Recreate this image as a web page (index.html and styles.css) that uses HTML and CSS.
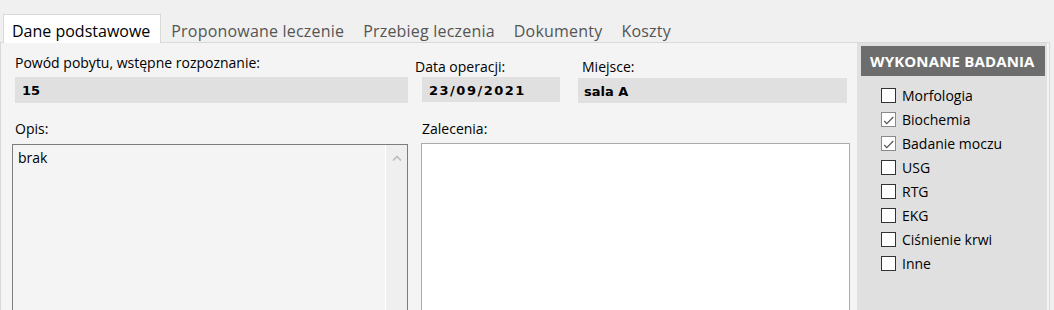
FILE: index.html
```html
<!doctype html>
<html lang="pl">
<head>
  <meta charset="UTF-8">
  <title>Dane podstawowe</title>
  <link rel="stylesheet" href="styles.css">
</head>
<body>

  <ul class="tabs">
    <li class="tab active">Dane podstawowe</li>
    <li class="tab">Proponowane leczenie</li>
    <li class="tab">Przebieg leczenia</li>
    <li class="tab">Dokumenty</li>
    <li class="tab">Koszty</li>
  </ul>

  <div class="panel">
    <div class="main">
      <div class="fields">
        <div class="group group-reason">
          <label>Powód pobytu, wstępne rozpoznanie:</label>
          <div class="field">15</div>
        </div>
        <div class="group group-date">
          <label>Data operacji:</label>
          <div class="field field-date">23/09/2021</div>
        </div>
        <div class="group group-place">
          <label>Miejsce:</label>
          <div class="field">sala A</div>
        </div>
      </div>

      <div class="notes">
        <div class="note note-desc">
          <label>Opis:</label>
          <div class="memo readonly">
            <div class="memo-text">brak</div>
            <div class="scroll">
              <svg width="10" height="6" viewBox="0 0 10 6"><path d="M1 5.5 L5 1.5 L9 5.5" fill="none" stroke="#bdbdbd" stroke-width="1.6"/></svg>
            </div>
          </div>
        </div>
        <div class="note note-recs">
          <label>Zalecenia:</label>
          <div class="memo"></div>
        </div>
      </div>
    </div>

    <div class="tests">
      <h2>WYKONANE BADANIA</h2>
      <ul class="checks">
        <li><span class="box"></span>Morfologia</li>
        <li><span class="box checked"><svg width="13" height="13" viewBox="0 0 13 13"><path d="M2.3 8 L4.8 10.6 L11.3 4" fill="none" stroke="#555" stroke-width="1.2"/></svg></span>Biochemia</li>
        <li><span class="box checked"><svg width="13" height="13" viewBox="0 0 13 13"><path d="M2.3 8 L4.8 10.6 L11.3 4" fill="none" stroke="#555" stroke-width="1.2"/></svg></span>Badanie moczu</li>
        <li><span class="box"></span>USG</li>
        <li><span class="box"></span>RTG</li>
        <li><span class="box"></span>EKG</li>
        <li><span class="box"></span>Ciśnienie krwi</li>
        <li><span class="box"></span>Inne</li>
      </ul>
    </div>
  </div>

</body>
</html>
```

FILE: styles.css
```css
html, body {
  height: 100%;
}
body {
  margin: 0;
  overflow: hidden;
  background: #f0f0f0;
  color: #000;
  font-family: "Open Sans", "Noto Sans", sans-serif;
  font-size: 14px;
}

/* tab strip */
.tabs {
  display: flex;
  margin: 0;
  padding: 14px 0 0 3px;
  list-style: none;
}
.tab {
  box-sizing: border-box;
  height: 29px;
  margin-bottom: -1px;
  padding: 5px 9px 0 8px;
  border: 1px solid transparent;
  border-bottom: 0;
  line-height: 22px;
  font-size: 16px;
  letter-spacing: 0.2px;
  color: #555;
}
.tab.active {
  position: relative;
  z-index: 1;
  padding: 5px 10px 0 8px;
  border-color: #d9d9d9;
  background: #fff;
  color: #000;
  letter-spacing: 0;
}
.tab.active + .tab {
  padding-left: 9px;
}

/* panel */
.panel {
  box-sizing: border-box;
  display: flex;
  width: 1050px;
  height: 270px;
  overflow: hidden;
  border: 1px solid #d9d9d9;
  background: #f4f4f4;
}
.main {
  flex: 1;
}
label {
  display: block;
  height: 24px;
  line-height: 19px;
}

.fields {
  display: flex;
  margin-top: 10px;
}
.group-reason {
  width: 393px;
  margin-left: 14px;
}
.group-date {
  margin-left: 7px;
}
.group-date label,
.group-place label {
  box-sizing: border-box;
  padding-top: 4px;
}
.group-date .field {
  width: 138px;
  margin-left: 7px;
}
.group-place {
  margin-left: 18px;
}
.group-place label {
  padding-left: 4px;
}
.group-place .field {
  width: 269px;
  height: 25px;
  margin-top: 1px;
  padding-left: 6px;
}
.field {
  box-sizing: border-box;
  height: 26px;
  padding-left: 7px;
  background: #e0e0e0;
  font-family: "DejaVu Sans", Verdana, sans-serif;
  font-weight: bold;
  font-size: 13px;
  line-height: 28px;
}
.field-date {
  height: 25px;
  letter-spacing: 1.5px;
}

.notes {
  display: flex;
  margin-top: 16px;
}
.note-desc {
  width: 396px;
  margin-left: 11px;
}
.note-desc label {
  padding-left: 3px;
}
.note-recs {
  width: 429px;
  margin-left: 13px;
}
.note-recs label {
  padding-left: 1px;
}
.memo {
  box-sizing: border-box;
  height: 180px;
  border: 1px solid #ababab;
  background: #fff;
}
.memo.readonly {
  display: flex;
  margin-top: 1px;
  border-color: #7d7d7d;
  background: #f4f4f4;
}
.memo-text {
  flex: 1;
  padding: 3px 5px;
  line-height: 19px;
}
.scroll {
  width: 21px;
  border-left: 1px solid #fff;
  background: #efefef;
}
.scroll svg {
  display: block;
  margin: 10px auto 0;
}

/* tests column */
.tests {
  box-sizing: border-box;
  width: 190px;
  margin-right: 2px;
  padding: 3px 2px 0 4px;
  background: #e0e0e0;
}
.tests h2 {
  height: 30px;
  margin: 0;
  padding-left: 9px;
  background: #6d6d6d;
  color: #fff;
  font-size: 15px;
  font-weight: bold;
  letter-spacing: 0.15px;
  line-height: 30px;
}
.checks {
  margin: 7px 0 0;
  padding: 0 0 0 20px;
  list-style: none;
}
.checks li {
  display: flex;
  align-items: center;
  gap: 6px;
  height: 24.1px;
  line-height: 19px;
}
.box {
  box-sizing: border-box;
  display: flex;
  align-items: center;
  justify-content: center;
  width: 15px;
  height: 15px;
  border: 1px solid #333;
  background: #fff;
}
.box.checked {
  border-color: #8a8a8a;
}
```
